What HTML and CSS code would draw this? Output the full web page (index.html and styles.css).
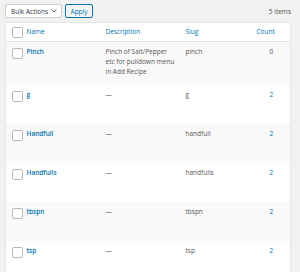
FILE: index.html
```html
<!DOCTYPE html>
<html lang="en">
<head>
    <meta charset="UTF-8">
    <meta name="viewport" content="width=device-width, initial-scale=1.0">
    <title>Ingredient Units</title>
    <link rel="stylesheet" href="styles.css">
</head>
<body>
    <div class="wrap">
        <div class="tablenav">
            <div class="bulk-select">
                <span>Bulk Actions</span>
                <svg class="chevron" width="6" height="4" viewBox="0 0 6 4"><path d="M0.5 0.5 L3 3 L5.5 0.5" fill="none" stroke="#555" stroke-width="0.9"/></svg>
            </div>
            <button class="apply">Apply</button>
            <div class="items-count">5 items</div>
        </div>

        <table class="list-table">
            <thead>
                <tr>
                    <th class="col-check"><span class="cb"></span></th>
                    <th class="col-name"><a href="#">Name</a></th>
                    <th class="col-desc"><a href="#">Description</a></th>
                    <th class="col-slug"><a href="#">Slug</a></th>
                    <th class="col-count"><a href="#">Count</a></th>
                </tr>
            </thead>
            <tbody>
                <tr class="alt">
                    <td class="col-check"><span class="cb"></span></td>
                    <td class="col-name"><a href="#" class="row-title">Pinch</a></td>
                    <td class="col-desc">Pinch of Salt/Pepper etc for pulldown menu in Add Recipe</td>
                    <td class="col-slug">pinch</td>
                    <td class="col-count num">0</td>
                </tr>
                <tr>
                    <td class="col-check"><span class="cb"></span></td>
                    <td class="col-name"><a href="#" class="row-title">g</a></td>
                    <td class="col-desc dash">—</td>
                    <td class="col-slug">g</td>
                    <td class="col-count"><a href="#">2</a></td>
                </tr>
                <tr class="alt">
                    <td class="col-check"><span class="cb"></span></td>
                    <td class="col-name"><a href="#" class="row-title">Handfull</a></td>
                    <td class="col-desc dash">—</td>
                    <td class="col-slug">handfull</td>
                    <td class="col-count"><a href="#">2</a></td>
                </tr>
                <tr>
                    <td class="col-check"><span class="cb"></span></td>
                    <td class="col-name"><a href="#" class="row-title">Handfulls</a></td>
                    <td class="col-desc dash">—</td>
                    <td class="col-slug">handfulls</td>
                    <td class="col-count"><a href="#">2</a></td>
                </tr>
                <tr class="alt">
                    <td class="col-check"><span class="cb"></span></td>
                    <td class="col-name"><a href="#" class="row-title">tbspn</a></td>
                    <td class="col-desc dash">—</td>
                    <td class="col-slug">tbspn</td>
                    <td class="col-count"><a href="#">2</a></td>
                </tr>
                <tr>
                    <td class="col-check"><span class="cb"></span></td>
                    <td class="col-name"><a href="#" class="row-title">tsp</a></td>
                    <td class="col-desc dash">—</td>
                    <td class="col-slug">tsp</td>
                    <td class="col-count"><a href="#">2</a></td>
                </tr>
            </tbody>
        </table>
    </div>
</body>
</html>
```

FILE: styles.css
```css
body { margin: 0; background: #f1f1f1; font-family: "Open Sans", Arial, sans-serif; font-size: 6.5px; color: #444; }
a { color: #0073aa; text-decoration: none; }
.wrap { padding: 4px 9px 0 5px; }

/* toolbar above the table */
.tablenav { display: flex; align-items: center; height: 14px; margin-bottom: 4px; }
.bulk-select { display: flex; align-items: center; justify-content: space-between; box-sizing: border-box; width: 57px; height: 14px; padding: 0 4px 0 5px; background: #fff; border: 1px solid #ccc; border-radius: 2px; color: #32373c; }
.apply { box-sizing: border-box; height: 14px; width: 28px; margin-left: 3px; padding: 0; background: #f3f5f6; border: 1px solid #0073aa; border-radius: 2px; color: #0073aa; font-family: inherit; font-size: 6.5px; }
.items-count { margin-left: auto; margin-top: 1px; color: #555; }

/* list table */
.list-table { table-layout: fixed; border-collapse: collapse; width: 286px; background: #fff; border: 1px solid #e5e5e5; }
.list-table th, .list-table td { box-sizing: border-box; padding: 0 1px; text-align: left; line-height: 10px; }
.list-table th { height: 19px; font-weight: normal; vertical-align: middle; border-bottom: 1px solid #e1e1e1; }
.list-table td { height: 39px; padding-top: 5px; vertical-align: top; color: #555; }
.list-table tr.alt td { background: #f9f9f9; }
.list-table tr.alt:first-child td { height: 43px; }

.col-check { width: 20px; }
.col-name { width: 79px; }
.col-desc { width: 80px; }
.col-slug { width: 67px; }
.list-table th.col-count { padding-left: 5px; }
.list-table td.col-count { padding-left: 18px; }

.cb { display: block; width: 9px; height: 9px; margin-left: 5px; border: 1px solid #b4b9be; border-radius: 2px; background: #fff; }
td .cb { margin-top: 1px; }
.row-title { font-weight: 600; }
.list-table .col-desc { padding-right: 9px; }
.dash { color: #999; }
.num { color: #555; }
```
